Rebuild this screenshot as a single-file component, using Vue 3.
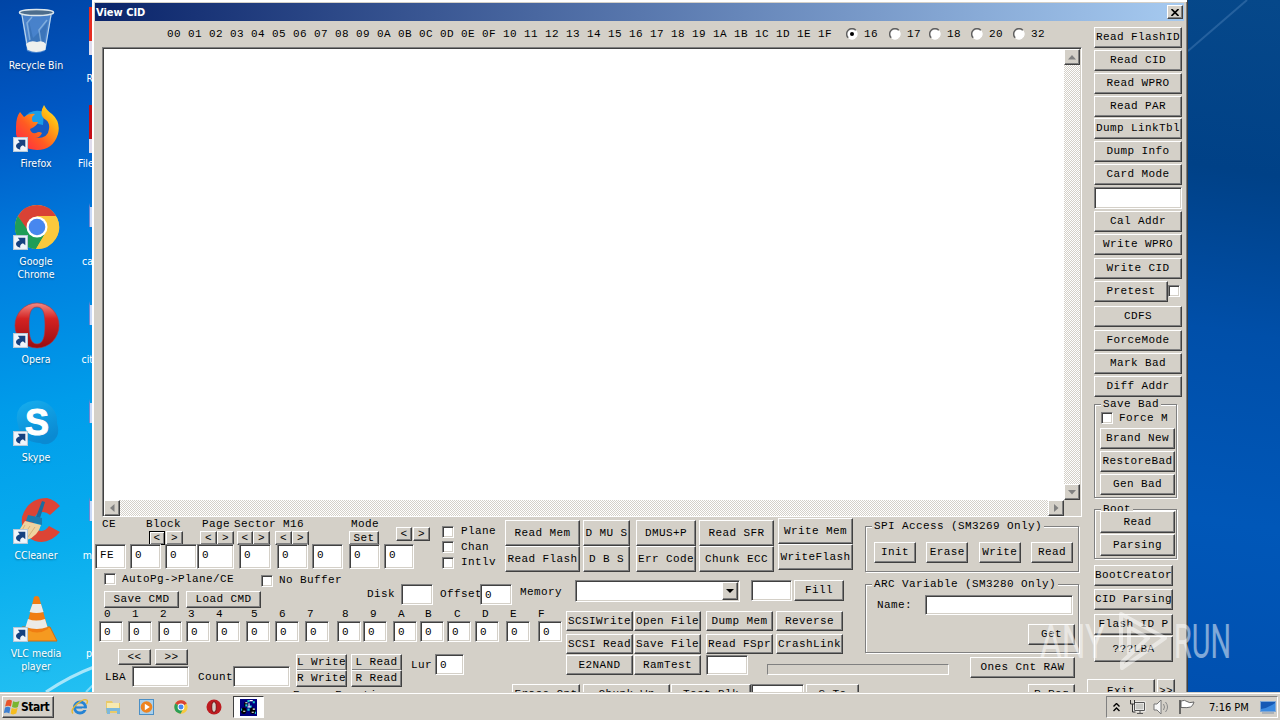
<template>
  <div class="desktop">
    <!-- light streaks of the wallpaper -->
    <svg class="streaks" width="1280" height="692" viewBox="0 0 1280 692">
      <path d="M1188 51L1247 0" stroke="#6fa0d0" stroke-opacity=".3" stroke-width="2" />
      <path d="M46 692Q70 676 94 667" fill="none" stroke="#c8f0fc" stroke-opacity=".8" stroke-width="3" />
      <path d="M86 692L94 684" stroke="#c8f0fc" stroke-opacity=".6" stroke-width="2" />
    </svg>

    <!-- desktop shortcuts -->
    <div class="shortcuts">
      <div v-for="s in shortcuts" :key="s.id" class="shortcut">
        <div class="shortcut__pic">
          <svg v-if="s.id === 'bin'" width="48" height="48" viewBox="0 0 48 48">
            <path d="M9 6 L15 44 Q24 48 33 44 L40 6 Z" fill="#8fb9e8" fill-opacity=".5" />
            <path d="M10 8 L16 43 M39 8 L33 43" stroke="#b9d4ec" stroke-width="1.2" fill="none" />
            <path d="M17 14l4 17 8-8 7-9-4 22-14-2z" fill="#3269ab" opacity=".55" />
            <path d="M20 10l-5 6 3 17M35 13l-8 10 2 12" stroke="#b7d7ef" stroke-width="1.500" fill="none" opacity=".5" />
            <path d="M14 37 Q18 33 25 35 Q31 33 34 37 L33 43 Q24 47 16 43Z" fill="#eef0ee" />
            <ellipse cx="24.5" cy="5.500" rx="17" ry="3" fill="#4d6d8c" stroke="#dce7ed" stroke-width="1.500" />
          </svg>
          <svg v-else-if="s.id === 'firefox'" width="48" height="48" viewBox="0 0 48 48">
            <defs>
              <linearGradient id="ff" x1="0" y1="1" x2="1" y2="0">
                <stop offset="0" stop-color="#ff1d50" />
                <stop offset=".4" stop-color="#ff5b22" />
                <stop offset=".75" stop-color="#ffb813" />
                <stop offset="1" stop-color="#fff34a" />
              </linearGradient>
            </defs>
            <circle cx="26" cy="22" r="16" fill="#155bc4" />
            <path d="M12 13 Q19 3 32 7 L31 20 L22 18Z" fill="#199ee8" />
            <path d="M4 22 Q4 12 8 7 L12 12 Q17 8 23 9 Q18 13 21 17 L26 17 Q25 21 18 24 Q19 29 24 28 Q27 26 30 28 Q28 33 23 33 Q36 34 37 24 Q38 18 34 15 Q26 10 32 0 Q35 6 40 9 Q49 17 46 29 Q41 45 25 45 Q7 44 4 29Z" fill="url(#ff)" />
          </svg>
          <svg v-else-if="s.id === 'chrome'" width="48" height="48" viewBox="0 0 48 48">
            <circle cx="25" cy="24" r="22" fill="#fbc93d" />
            <path d="M25 13 H44.1 A22 22 0 0 0 5.900 13 L15 28Z" fill="#d94235" />
            <path d="M5.9 13 A22 22 0 0 0 24 46 L34 29 L17 29Z" fill="#1f9d57" />
            <path d="M34 14 H44.7 A22 22 0 0 1 24 46 L34 29Z" fill="#fbc93d" />
            <circle cx="25" cy="24" r="10.500" fill="#fff" />
            <circle cx="25" cy="24" r="8.300" fill="#4787ef" />
          </svg>
          <svg v-else-if="s.id === 'opera'" width="48" height="48" viewBox="0 0 48 48">
            <defs>
              <linearGradient id="op" x1="0" y1="0" x2="0" y2="1">
                <stop offset="0" stop-color="#f08c86" />
                <stop offset=".35" stop-color="#d42222" />
                <stop offset="1" stop-color="#980d10" />
              </linearGradient>
            </defs>
            <path fill-rule="evenodd" fill="url(#op)" stroke="#b93035" stroke-width=".6" d="M25 2 A22 22.500 0 1 0 25 47 A22 22.500 0 1 0 25 2Z M25 6 C32 6 33 14 33 24.500 C33 36 31 43 25 43 C19 43 17 36 17 24.500 C17 14 18 6 25 6Z" />
          </svg>
          <svg v-else-if="s.id === 'skype'" width="48" height="48" viewBox="0 0 48 48">
            <defs>
              <linearGradient id="sk" x1="0" y1="0" x2=".4" y2="1">
                <stop offset="0" stop-color="#16aeef" />
                <stop offset="1" stop-color="#0a8ad2" />
              </linearGradient>
            </defs>
            <path d="M16 3 Q28 -1 36 5 Q46 12 45 24 Q49 37 40 43 Q34 47 28 44 Q9 43 6 26 Q1 9 16 3Z" fill="url(#sk)" />
            <text x="25" y="36" text-anchor="middle" class="skype-s">S</text>
          </svg>
          <svg v-else-if="s.id === 'ccleaner'" width="50" height="48" viewBox="0 0 50 48">
            <path d="M48 9 L38 18 Q31 12 24 18 Q19 28 26 33 Q32 36 37 29 L48 35 Q37 48 23 44 Q8 38 10 20 Q16 1 35 1 Q43 3 48 9Z" fill="#dc4435" />
            <path d="M30 4 l3 1 -5 16 -4-1z" fill="#1c6c9e" />
            <path d="M16 18 l14 3 v7 l-16-4z" fill="#1c7cae" />
            <path d="M13 24 l16 4 q-3 11-14 15 l-9-8z" fill="#efd3a0" />
            <path d="M13 28l-5 9M18 29l-6 9M23 30l-7 10" stroke="#d9b27a" fill="none" />
          </svg>
          <svg v-else width="48" height="48" viewBox="0 0 48 48">
            <path d="M10 32 H38 L45 46 H7Z" fill="#f59a20" stroke="#d66b0a" />
            <path d="M22 2 Q24.500 0 27 2 L36 34 Q25 41 14 34Z" fill="#f07d12" />
            <path d="M20.500 9 L29 9 L31.500 17 Q24.500 19 17.500 17Z M16 24 Q24 27 33 24 L35.500 32 Q25 36 13.500 32Z" fill="#ecebe8" />
          </svg>
          <svg class="shortcut__arrow" v-if="s.id !== 'bin'" width="15" height="15" viewBox="0 0 14 14">
            <rect x=".5" y=".5" width="13" height="13" fill="#f0f5fa" stroke="#b7c9d8" />
            <path d="M4.500 2.500h7v7L9.300 7.600Q6 8.500 6.800 12Q1 10 3.500 6.500Q4.800 5.200 6.300 4.800Z" fill="#16417f" />
          </svg>
        </div>
        <div class="shortcut__name">{{ s.name }}</div>
      </div>
    </div>

    <!-- second icon column, mostly behind the dialog -->
    <div class="peek">
      <div v-for="(p, i) in peeks" :key="i" class="peek__item">
        <div class="peek__pic"><i :class="'peek__' + p.kind"></i></div>
        <div class="peek__name">{{ p.name }}</div>
      </div>
    </div>

    <div class="dialog">
      <div class="title">
        <span>View CID</span>
        <button class="title__close">
          <svg width="8" height="7" viewBox="0 0 8 7"><path d="M.5 0l7 7M7.500 0l-7 7" stroke="#000" stroke-width="1.600" /></svg>
        </button>
      </div>

      <div class="body">
        <div class="main">
          <div class="hexbar">
            <span class="hexbar__cols">{{ hexCols }}</span>
            <label v-for="(r, i) in radios" :key="r.label" class="radio" :style="{ width: r.w + 'px' }">
              <svg width="12" height="12" viewBox="0 0 12 12">
                <circle cx="6" cy="6" r="5.200" fill="#fff" stroke="#fff" />
                <path d="M2.200 9.800A5.300 5.300 0 0 1 9.800 2.200" fill="none" stroke="#606060" stroke-width="1.500" />
                <circle v-if="i === 0" cx="6" cy="6" r="2" fill="#000" />
              </svg>
              <span>{{ r.label }}</span>
            </label>
          </div>

          <div class="memo">
            <div class="memo__top">
              <div class="memo__text"></div>
              <div class="bar bar--v">
                <span class="bar__btn"><svg width="8" height="5"><path d="M4 0l4 4.500H0z" fill="#808080" /></svg></span>
                <span class="bar__btn"><svg width="8" height="5"><path d="M0 0h8L4 4.500z" fill="#808080" /></svg></span>
              </div>
            </div>
            <div class="memo__bottom">
              <div class="bar bar--h">
                <span class="bar__btn"><svg width="5" height="8"><path d="M4.500 0v8L0 4z" fill="#808080" /></svg></span>
                <span class="bar__btn"><svg width="5" height="8"><path d="M0 0v8l4.500-4z" fill="#808080" /></svg></span>
              </div>
            </div>
          </div>

          <div class="panel">
            <div class="panel__left">
              <div class="band">
                <div class="address">
                  <div class="row row--labels">
                    <span v-for="l in addrLabels" :key="l.t" :style="place(l)">{{ l.t }}</span>
                  </div>
                  <div class="row row--spin">
                    <button
                      v-for="(b, i) in spins"
                      :key="i"
                      class="btn"
                      :class="{ 'btn--default': i === 0, 'btn--up': i > 8 }"
                      :style="place(b)"
                    >{{ b.t }}</button>
                  </div>
                  <div class="row row--addr">
                    <div v-for="(f, i) in addrFields" :key="i" class="field" :style="place(f)">{{ f.t }}</div>
                  </div>
                </div>
                <div class="flags">
                  <label v-for="f in ['Plane', 'Chan', 'Intlv']" :key="f" class="check"><i></i>{{ f }}</label>
                </div>
                <div class="actions">
                  <div v-for="(col, i) in actions" :key="i" class="actions__col" :style="{ width: col.w + 'px' }">
                    <button v-for="t in col.items" :key="t" class="btn">{{ t }}</button>
                  </div>
                </div>
              </div>

              <div class="lower">
                <div class="lower__left">
                  <div class="options">
                    <div class="options__cmd">
                      <div class="options__checks">
                        <label class="check"><i></i><span>AutoPg-&gt;Plane/CE</span></label>
                        <label class="check check--low"><i></i><span>No Buffer</span></label>
                      </div>
                      <div class="options__btns">
                        <button class="btn">Save CMD</button>
                        <button class="btn">Load CMD</button>
                      </div>
                    </div>
                    <div class="options__disk">
                      <span>Disk</span>
                      <div class="field"></div>
                      <span class="options__offset">Offset</span>
                      <div class="field">0</div>
                      <span class="options__memory">Memory</span>
                    </div>
                  </div>
                  <div class="row row--digits">
                    <span v-for="d in digits" :key="d.t" :style="place(d)">{{ d.t }}</span>
                  </div>
                  <div class="row row--bytes">
                    <div v-for="(b, i) in bytes" :key="i" class="field" :style="place(b)">0</div>
                  </div>
                  <div class="lba">
                    <div class="lba__range">
                      <div class="lba__nav">
                        <button class="btn">&lt;&lt;</button>
                        <button class="btn">&gt;&gt;</button>
                      </div>
                      <div class="lba__fields">
                        <span>LBA</span>
                        <div class="field"></div>
                        <span class="lba__count">Count</span>
                        <div class="field"></div>
                      </div>
                    </div>
                    <div class="lba__rw">
                      <button class="btn">L Write</button>
                      <button class="btn">L Read</button>
                      <button class="btn">R Write</button>
                      <button class="btn">R Read</button>
                      <span class="lba__cut">Erase Function</span>
                    </div>
                    <span class="lba__lur">Lur</span>
                    <div class="field field--lur">0</div>
                  </div>
                </div>

                <div class="lower__right">
                  <div class="fill">
                    <div class="combo">
                      <span class="combo__btn"><svg width="8" height="4"><path d="M0 0h8L4 4z" /></svg></span>
                    </div>
                    <div class="field fill__value"></div>
                    <button class="btn fill__btn">Fill</button>
                  </div>
                  <div class="scsi">
                    <button v-for="t in scsi" :key="t" class="btn">{{ t }}</button>
                    <div class="field"></div>
                    <div class="progress"></div>
                  </div>
                  <div class="row row--cut">
                    <template v-for="(c, i) in cutRow" :key="i">
                      <button v-if="c.t" class="btn" :style="place(c)">{{ c.t }}</button>
                      <div v-else class="field" :style="place(c)"></div>
                    </template>
                  </div>
                </div>
              </div>
            </div>

            <div class="panel__right">
              <div class="group group--spi">
                <span class="group__name">SPI Access (SM3269 Only)</span>
                <div class="group__row">
                  <button v-for="t in ['Init', 'Erase', 'Write', 'Read']" :key="t" class="btn">{{ t }}</button>
                </div>
              </div>
              <div class="group group--arc">
                <span class="group__name">ARC Variable (SM3280 Only)</span>
                <div class="arc__row">
                  <span>Name:</span>
                  <div class="field"></div>
                </div>
                <button class="btn arc__get">Get</button>
              </div>
              <button class="btn ones">Ones Cnt RAW</button>
              <button class="btn clear">R Reg</button>
            </div>
          </div>
        </div>

        <div class="side">
          <button v-for="t in sideTop" :key="t" class="btn">{{ t }}</button>
          <div class="field side__field"></div>
          <button class="btn side__cal">Cal Addr</button>
          <button class="btn side__wpro">Write WPRO</button>
          <button class="btn side__cid">Write CID</button>
          <div class="side__pretest">
            <button class="btn">Pretest</button>
            <label class="check"><i></i></label>
          </div>
          <button class="btn side__cdfs">CDFS</button>
          <button class="btn side__force">ForceMode</button>
          <button class="btn">Mark Bad</button>
          <button class="btn">Diff Addr</button>

          <div class="group group--bad">
            <span class="group__name">Save Bad</span>
            <label class="check"><i></i>Force M</label>
            <button class="btn">Brand New</button>
            <button class="btn">RestoreBad</button>
            <button class="btn">Gen Bad</button>
          </div>
          <div class="group group--boot">
            <span class="group__name">Boot</span>
            <button class="btn">Read</button>
            <button class="btn">Parsing</button>
          </div>
          <div class="side__last">
            <button class="btn">BootCreator</button>
            <button class="btn">CID Parsing</button>
            <button class="btn side__flash">Flash ID P</button>
            <button class="btn side__lba">???LBA</button>
          </div>
          <div class="side__exit">
            <button class="btn">Exit</button>
            <button class="btn">&gt;&gt;</button>
          </div>
        </div>
      </div>
    </div>

    <svg class="watermark" width="200" height="70" viewBox="0 0 200 70">
      <text x="4" y="49" textLength="65" lengthAdjust="spacingAndGlyphs">ANY</text>
      <path d="M85 42 V5 L129 29 L86 59 V53 L112 29 L93 18 V44 L107 35" fill="none" stroke="#fff" stroke-width="4" stroke-linejoin="round" />
      <text x="138" y="49" textLength="57" lengthAdjust="spacingAndGlyphs">RUN</text>
    </svg>

    <div class="taskbar">
      <button class="start">
        <svg width="16" height="16" viewBox="0 0 15 15">
          <path d="M2.500 1.500q3-1.500 5 .2L6.500 7Q4 5.500 1 7z" fill="#e8542a" />
          <path d="M8.500 2.200q3 1.300 6-.4L13 7.400q-3 1.600-5.500.1z" fill="#79b52f" />
          <path d="M1 8q3-1.500 5 .2L5 13.500Q2.500 12-.2 13.300z" fill="#3d7fd0" />
          <path d="M7.200 8.500q3 1.300 5.600-.2L11.500 13.700q-3 1.500-5.300.1z" fill="#f6bd1e" />
        </svg>
        Start
      </button>
      <div class="quick">
        <span class="quick__item">
          <svg width="18" height="18" viewBox="0 0 18 18">
            <circle cx="9" cy="9.500" r="5.500" fill="none" stroke="#2583d4" stroke-width="3" />
            <path d="M5 9.500h10" stroke="#2583d4" stroke-width="2.200" />
            <path d="M11 11.200h5" stroke="#d4d0c8" stroke-width="1.600" />
            <path d="M2 15.500Q-1 12 6 6T16 2.200Q17 4 15.500 6" fill="none" stroke="#e7b830" stroke-width="1.400" />
          </svg>
        </span>
        <span class="quick__item">
          <svg width="18" height="18" viewBox="0 0 18 18">
            <path d="M2 3h6l1 2h7v10H2z" fill="#e9ca69" />
            <path d="M3 5h12v6H3z" fill="#f8eab0" />
            <path d="M2 10h14v6h-3v-3H6v3H3z" fill="#7cb8dc" />
          </svg>
        </span>
        <span class="quick__item">
          <svg width="18" height="18" viewBox="0 0 18 18">
            <rect x="1.500" y="1.500" width="14" height="15" fill="#a9d0ec" stroke="#4b8fc5" />
            <circle cx="8.500" cy="9" r="5.800" fill="#ee8420" />
            <path d="M6.800 5.800l5 3.200-5 3.200z" fill="#fff" />
          </svg>
        </span>
        <span class="quick__item">
          <svg width="16" height="16" viewBox="0 0 18 18">
            <circle cx="9" cy="9" r="7.500" fill="#f7c940" />
            <path d="M9 9L2.500 5.200a7.500 7.500 0 0 1 13 0z" fill="#d94235" />
            <path d="M9 9L2.500 5.200A7.500 7.500 0 0 0 8.500 16.500L12 10z" fill="#2b9e57" />
            <circle cx="9" cy="9" r="3.800" fill="#fff" />
            <circle cx="9" cy="9" r="2.800" fill="#4787ef" />
          </svg>
        </span>
        <span class="quick__item">
          <svg width="18" height="18" viewBox="0 0 18 18">
            <circle cx="9" cy="9" r="7.500" fill="#bd1b20" />
            <ellipse cx="9" cy="9" rx="2.300" ry="5.300" fill="#d4d0c8" stroke="#7a1013" />
          </svg>
        </span>
        <span class="quick__active">
          <svg width="17" height="17" viewBox="0 0 16 16">
            <rect width="16" height="16" fill="#00007e" />
            <path d="M4 3h3v4H4zM1 11q0-3 2.500-3T6 11t-2.500 3T1 11M9.500 11q0-3 2.500-3t2.500 3-2.500 3-2.500-3z" fill="#000" />
            <path d="M7 1h2v2H7zM12 2h2v2h-2zM5 5h2v2H5zM9 6h2v2H9zM7 9h2v2H7zM1 9h1v2H1zM14 12h1v2h-1z" fill="#18c8d0" />
            <path d="M9 1h3v1H9zM5 3h2v1H5zM7 7h3v1H7zM3 11h2v1H3zM12 9h2v1h-2zM11 12h2v1h-2zM8 4h1v3H8z" fill="#fff" />
          </svg>
        </span>
      </div>
      <div class="tray">
        <svg class="tray__more" width="7" height="9"><path d="M.5 3.500l3-3 3 3M.5 8l3-3 3 3" fill="none" stroke="#000" stroke-width="1.400" /></svg>
        <svg class="tray__net" width="17" height="17" viewBox="0 0 17 17">
          <path d="M5.500 3.500h10v8h-10z" fill="#c8c8c4" stroke="#fff" stroke-width="2" />
          <path d="M5.500 3.500h10v8h-10zM8 14.500h6M11 12v2" fill="none" stroke="#555" />
          <path d="M1.500 1v4h4V1M3.500 5v8h3" fill="none" stroke="#333" />
        </svg>
        <svg class="tray__vol" width="17" height="16" viewBox="0 0 17 16">
          <path d="M1 5h3l4-4v14l-4-4H1z" fill="#f8f8f8" stroke="#777" />
          <path d="M10.500 5q2 3 0 6M12.500 3q4 5 0 10" fill="none" stroke="#888" />
        </svg>
        <svg class="tray__flag" width="17" height="16" viewBox="0 0 17 16">
          <path d="M3 2q4-1.500 6 .5t7 .5q-1 4-3.500 5T3 8.500z" fill="#fff" stroke="#666" />
          <path d="M2 1v14" stroke="#444" stroke-width="1.500" />
        </svg>
        <span class="tray__time">7:16 PM</span>
        <svg class="tray__desk" width="16" height="13" viewBox="0 0 16 13">
          <rect x=".5" y=".5" width="15" height="10" fill="#1559b5" stroke="#7ea7d6" />
          <path d="M1 8Q8 7 15 2v8H1z" fill="#3b8ae0" />
          <path d="M2 12h12" stroke="#8394a8" />
        </svg>
      </div>
    </div>
  </div>
</template>

<script setup>
const shortcuts = [
  { id: 'bin', name: 'Recycle Bin' },
  { id: 'firefox', name: 'Firefox' },
  { id: 'chrome', name: 'Google Chrome' },
  { id: 'opera', name: 'Opera' },
  { id: 'skype', name: 'Skype' },
  { id: 'ccleaner', name: 'CCleaner' },
  { id: 'vlc', name: 'VLC media player' },
]

const peeks = [
  { name: 'R', kind: 'acrobat' },
  { name: 'File', kind: 'red' },
  { name: 'ca', kind: 'doc' },
  { name: 'cit', kind: 'doc' },
  { name: '', kind: 'doc' },
  { name: 'm', kind: 'doc' },
  { name: 'p', kind: 'none' },
]

const hexCols = Array.from({ length: 32 }, (_, i) =>
  i.toString(16).toUpperCase().padStart(2, '0')
).join(' ')

const radios = [
  { label: '16', w: 43 },
  { label: '17', w: 40 },
  { label: '18', w: 42 },
  { label: '20', w: 42 },
  { label: '32', w: 40 },
]

// turns [left, width, text] into gap + width inside a flex row
function spread(start, cells) {
  let at = start
  return cells.map(([x, w, t]) => {
    const cell = { gap: x - at, w, t }
    at = x + w
    return cell
  })
}

function place(c) {
  return { marginLeft: c.gap + 'px', width: c.w + 'px' }
}

const addrLabels = spread(95, [
  [102, 14, 'CE'], [146, 35, 'Block'], [202, 28, 'Page'],
  [234, 42, 'Sector'], [283, 21, 'M16'], [351, 28, 'Mode'],
])

const spins = spread(95, [
  [149, 16, '<'], [166, 17, '>'], [200, 17, '<'], [217, 17, '>'],
  [237, 16, '<'], [253, 17, '>'], [275, 17, '<'], [292, 17, '>'],
  [349, 30, 'Set'], [396, 16, '<'], [413, 17, '>'],
])

const addrFields = spread(95, [
  [95, 31, 'FE'], [130, 31, '0'], [165, 32, '0'], [197, 37, '0'], [239, 32, '0'],
  [277, 31, '0'], [312, 31, '0'], [349, 31, '0'], [384, 30, '0'],
])

const actions = [
  { w: 75, items: ['Read Mem', 'Read Flash'] },
  { w: 47, items: ['D MU S', 'D B S'] },
  { w: 60, items: ['DMUS+P', 'Err Code'] },
  { w: 75, items: ['Read SFR', 'Chunk ECC'] },
  { w: 75, items: ['Write Mem', 'WriteFlash'] },
]

const digitX = [104, 132, 160, 188, 216, 251, 279, 307, 342, 370, 398, 425, 454, 482, 510, 538]
const digits = spread(95, digitX.map((x, i) => [x, 8, i.toString(16).toUpperCase()]))

const byteX = [99, 128, 158, 186, 216, 246, 275, 305, 337, 363, 393, 420, 447, 475, 506, 538]
const bytes = spread(95, byteX.map((x) => [x, 24, '0']))

const scsi = [
  'SCSIWrite', 'Open File', 'Dump Mem', 'Reverse',
  'SCSI Read', 'Save File', 'Read FSpr', 'CrashLink',
  'E2NAND', 'RamTest',
]

const cutRow = spread(566, [
  [512, 68, 'Erase Cnt'], [583, 87, 'Chunk Wr'], [671, 80, 'Test Blk'],
  [751, 53, ''], [806, 53, 'S Te'],
])

const sideTop = [
  'Read FlashID', 'Read CID', 'Read WPRO', 'Read PAR',
  'Dump LinkTbl', 'Dump Info', 'Card Mode',
]
</script>

<style>
body {
  margin: 0;
  overflow: hidden;
}
</style>

<style scoped>
.desktop,
.desktop * {
  box-sizing: border-box;
}
.desktop {
  position: relative;
  width: 1280px;
  height: 720px;
  overflow: hidden;
  font-family: "DejaVu Sans Condensed", "DejaVu Sans", sans-serif;
  font-size: 10.5px;
  background:
    linear-gradient(168deg, #0045a6 0%, #0058c4 17%, #007bdd 35%, #009cea 58%, #08adee 78%, #23c0f2 100%) 0 0 / 94px 692px no-repeat,
    linear-gradient(188deg, #06488a 0%, #004187 25%, #004fa9 48%, #0057b8 75%, #0050b0 100%) 100% 0 / 96px 692px no-repeat,
    #0057b8;
}
.streaks {
  position: absolute;
  left: 0;
  top: 0;
}

/* shortcuts */
.shortcuts {
  position: absolute;
  left: 0;
  top: 7px;
  width: 72px;
}
.shortcut {
  height: 98px;
  text-align: center;
  color: #fff;
}
.shortcut__pic {
  position: relative;
  height: 48px;
  margin-left: 12px;
  text-align: left;
}
.shortcut__pic > svg {
  display: block;
}
.shortcut__pic > .shortcut__arrow {
  position: absolute;
  left: 1px;
  top: 32px;
}
.shortcut__name {
  width: 66px;
  margin: 4px auto 0;
  line-height: 13px;
  text-shadow: 0 1px 2px rgba(0, 0, 0, .4);
}
.skype-s {
  font: bold 36px "Liberation Sans", sans-serif;
  fill: #fff;
  stroke: #fff;
}
.peek {
  position: absolute;
  left: 78px;
  top: 7px;
  width: 15px;
  overflow: hidden;
  color: #fff;
}
.peek__item {
  height: 98px;
}
.peek__pic {
  height: 48px;
  padding-left: 11px;
}
.peek__pic i {
  display: block;
  height: 48px;
}
.peek__pic .peek__acrobat {
  background: linear-gradient(#e52c21 70%, #dfdcec 70%);
}
.peek__pic .peek__red {
  background: linear-gradient(#c40d16 70%, #dfdcec 70%);
}
.peek__pic .peek__doc {
  height: 24px;
  border-top: 4px solid transparent;
  border-left: 1px solid #7386cf;
  background: #c9d9f6;
  background-clip: padding-box;
}
.peek__name {
  margin-top: 4px;
  line-height: 13px;
  text-align: right;
}
.peek__item:nth-child(1) .peek__name {
  margin-top: 17px;
}
.peek__item:nth-child(6) .peek__name,
.peek__item:nth-child(7) .peek__name {
  padding-right: 1px;
}

/* dialog */
.dialog {
  position: absolute;
  left: 92px;
  top: 0;
  width: 1096px;
  height: 692px;
  padding: 3px 3px 0;
  overflow: hidden;
  background: #d4d0c8;
  border-right: 1px solid #404040;
  box-shadow: inset 2px 2px 0 #fff, inset -1px 0 0 #808080;
  font-family: "Liberation Mono", monospace;
  font-size: 11px;
  letter-spacing: .4px;
  line-height: 13px;
  color: #000;
  white-space: pre;
}
.title {
  display: flex;
  align-items: center;
  justify-content: space-between;
  height: 18px;
  padding: 0 1px;
  background: linear-gradient(90deg, #0a246a, #a6caf0);
  color: #fff;
  font: bold 11px "DejaVu Sans Condensed", sans-serif;
  letter-spacing: 0;
}
.title__close {
  display: flex;
  align-items: center;
  justify-content: center;
  width: 16px;
  height: 14px;
  padding: 0;
  background: #d4d0c8;
  border: 1px solid;
  border-color: #fff #404040 #404040 #fff;
  box-shadow: inset -1px -1px 0 #808080;
}
.body {
  display: flex;
  height: 671px;
}
.main {
  width: 990px;
  flex: none;
}

/* basic controls */
.btn {
  display: block;
  flex: none;
  height: 21px;
  padding: 0;
  overflow: hidden;
  background: #d4d0c8;
  border: 1px solid;
  border-color: #fff #404040 #404040 #fff;
  box-shadow: inset -1px -1px 0 #808080;
  font: inherit;
  letter-spacing: inherit;
  line-height: 13px;
  text-align: center;
  color: #000;
  white-space: pre;
}
.btn--default {
  border-color: #000;
  box-shadow: inset 1px 1px 0 #fff, inset -1px -1px 0 #808080;
}
.btn--up {
  margin-top: -4px;
}
.field {
  flex: none;
  height: 21px;
  padding: 2px 0 0 4px;
  background: #fff;
  border: 1px solid;
  border-color: #808080 #fff #fff #808080;
  box-shadow: inset 1px 1px 0 #404040, inset -1px -1px 0 #d4d0c8;
}
.check {
  display: flex;
  align-items: center;
  height: 13px;
}
.check i {
  width: 12px;
  height: 12px;
  margin-right: 7px;
  background: #fff;
  border: 1px solid;
  border-color: #808080 #fff #fff #808080;
  box-shadow: inset 1px 1px 0 #404040, inset -1px -1px 0 #d4d0c8;
}
.row {
  display: flex;
}
.row > * {
  flex: none;
}

/* header over the memo */
.hexbar {
  display: flex;
  align-items: center;
  height: 26px;
  padding-left: 72px;
}
.hexbar__cols {
  width: 679px;
}
.radio {
  display: flex;
  align-items: center;
  gap: 6px;
  white-space: nowrap;
}
.memo {
  width: 980px;
  height: 470px;
  margin-left: 7px;
  border: 1px solid;
  border-color: #808080 #fff #fff #808080;
  box-shadow: inset 1px 1px 0 #404040;
  padding: 1px;
}
.memo__top {
  display: flex;
  height: 451px;
}
.memo__text {
  flex: 1;
  background: #fff;
}
.memo__bottom {
  height: 15px;
  padding-right: 16px;
}
.bar {
  display: flex;
  justify-content: space-between;
  background: repeating-conic-gradient(#fff 0 25%, #d4d0c8 0 50%) 0 0 / 2px 2px;
}
.bar--v {
  width: 16px;
  flex-direction: column;
}
.bar--h {
  height: 16px;
}
.bar__btn,
.combo__btn {
  display: flex;
  align-items: center;
  justify-content: center;
  width: 16px;
  height: 16px;
  background: #d4d0c8;
  border: 1px solid;
  border-color: #fff #404040 #404040 #fff;
  box-shadow: inset -1px -1px 0 #808080;
}

/* bottom panel */
.panel {
  display: flex;
  height: 175px;
}
.panel__left {
  width: 770px;
  flex: none;
}
.band {
  display: flex;
  height: 55px;
}
.address {
  width: 347px;
}
.row--labels {
  height: 14px;
  padding-top: 1px;
}
.row--spin {
  height: 13px;
}
.row--spin .btn {
  height: 14px;
  line-height: 12px;
}
.row--addr .field {
  height: 25px;
  padding-top: 4px;
}
.flags {
  display: flex;
  flex-direction: column;
  gap: 2.5px;
  width: 63px;
  padding-top: 8px;
}
.actions {
  display: flex;
  gap: 3px;
  padding-top: 3px;
}
.actions__col {
  display: flex;
  flex-direction: column;
}
.actions__col .btn {
  height: 26px;
  padding-top: 1px;
}
.actions__col:nth-child(3) {
  margin-left: 3px;
}
.actions__col:last-child {
  margin: -2px 0 0 1px;
}
.lower {
  display: flex;
}
.lower__left {
  width: 471px;
  flex: none;
}
.options {
  display: flex;
  height: 36px;
}
.options__cmd {
  width: 272px;
  padding-left: 9px;
}
.options__checks {
  display: flex;
  height: 19px;
}
.options__checks .check {
  width: 157px;
}
.options__checks .check span {
  margin-top: 2px;
}
.options__checks .check i {
  margin-right: 6px;
}
.options__checks .check--low {
  width: 100px;
  margin-top: 2px;
}
.options__checks .check--low span {
  margin-top: 0;
}
.options__btns {
  display: flex;
  gap: 7px;
}
.options__btns .btn {
  width: 75px;
  height: 17px;
}
.options__disk {
  display: flex;
  padding-top: 12px;
}
.options__disk span {
  width: 34px;
  padding-top: 4px;
}
.options__disk .field {
  width: 32px;
  padding-top: 4px;
}
.options__disk .options__offset {
  width: 40px;
  margin-left: 7px;
}
.options__disk .options__memory {
  width: 42px;
  margin-left: 8px;
  padding-top: 2px;
}
.row--digits {
  height: 13px;
}
.row--bytes .field {
  padding-top: 4px;
}
.lba {
  display: flex;
  height: 50px;
}
.lba__range {
  width: 201px;
  flex: none;
  padding-top: 7px;
}
.lba__nav {
  display: flex;
  gap: 4px;
  padding-left: 23px;
}
.lba__nav .btn {
  width: 33px;
  height: 16px;
}
.lba__fields {
  display: flex;
  padding: 1px 0 0 10px;
}
.lba__fields span {
  width: 27px;
  padding-top: 5px;
}
.lba__fields .field {
  width: 57px;
}
.lba__fields .lba__count {
  width: 35px;
  margin-left: 9px;
}
.lba__rw {
  display: grid;
  grid-template-columns: 51px 51px;
  grid-auto-rows: 16px;
  column-gap: 4px;
  width: 106px;
  margin-top: 12px;
}
.lba__rw .btn {
  height: 17px;
}
.lba__cut {
  grid-column: 1 / 3;
  margin: 3px 0 0 -3px;
}
.lba__lur {
  width: 24px;
  margin: 17px 0 0 9px;
}
.field--lur {
  width: 29px;
  margin-top: 12px;
  padding-top: 4px;
}
.lower__right {
  width: 299px;
  flex: none;
}
.fill {
  display: flex;
  padding: 8px 0 0 9px;
}
.combo {
  display: flex;
  justify-content: flex-end;
  width: 165px;
  height: 22px;
  padding: 1px;
  background: #fff;
  border: 1px solid;
  border-color: #808080 #fff #fff #808080;
  box-shadow: inset 1px 1px 0 #404040, inset -1px -1px 0 #d4d0c8;
}
.combo__btn {
  height: 18px;
}
.fill__value {
  width: 41px;
  margin-left: 11px;
}
.fill__btn {
  width: 50px;
  margin-left: 2px;
}
.scsi {
  display: grid;
  grid-template-columns: 68px 67px 67px 67px;
  grid-template-rows: 23px 21px 21px;
  width: 277px;
  padding-top: 9px;
}
.scsi .btn,
.scsi .field {
  height: 20px;
}
.scsi > :nth-child(4n + 3) {
  margin-left: 5px;
}
.scsi > :nth-child(4n + 4) {
  margin-left: 8px;
}
.scsi .btn {
  width: 67px;
}
.scsi .field {
  width: 42px;
}
.scsi .progress {
  width: 182px;
  height: 11px;
  margin: 9px 0 0 -1px;
  border: 1px solid;
  border-color: #808080 #fff #fff #808080;
}
.row--cut {
  padding-top: 8px;
}
.row--cut .btn,
.row--cut .field {
  height: 24px;
}
.row--cut .btn {
  padding-bottom: 3px;
}

/* etched groups */
.group {
  flex: none;
  border: 1px solid #808080;
  box-shadow: 1px 1px 0 #fff, inset 1px 1px 0 #fff;
}
.group__name {
  display: block;
  width: max-content;
  height: 13px;
  margin: -7px 0 0 6px;
  padding: 0 2px;
  background: #d4d0c8;
}
.panel__right {
  display: flex;
  flex-direction: column;
  width: 214px;
  flex: none;
  padding-top: 9px;
}
.group--spi {
  height: 46px;
}
.group__row {
  display: flex;
  justify-content: space-between;
  padding: 9px 5px 0 8px;
}
.group__row .btn {
  width: 42px;
}
.group--arc {
  height: 69px;
  margin-top: 12px;
}
.arc__row {
  display: flex;
  padding: 4px 5px 0 11px;
}
.arc__row span {
  width: 48px;
  padding-top: 4px;
}
.arc__row .field {
  width: 148px;
  height: 20px;
}
.arc__get {
  width: 47px;
  margin: 9px 0 0 162px;
}
.ones {
  width: 105px;
  margin: 4px 0 0 105px;
}
.clear {
  width: 47px;
  height: 24px;
  margin: 6px 0 0 163px;
  padding-bottom: 3px;
}

/* right hand column */
.side {
  display: flex;
  flex-direction: column;
  width: 88px;
  flex: none;
  margin-left: 9px;
  padding-top: 6px;
}
.side > .btn,
.side__pretest {
  margin-bottom: 2px;
}
.side > .btn:nth-child(-n + 7) {
  margin-bottom: 1.85px;
}
.side__field {
  width: 88px;
  height: 22px;
}
.side > .side__cal {
  margin-top: 2px;
}
.side > .side__wpro {
  margin-bottom: 3px;
}
.side__pretest {
  display: flex;
  align-items: center;
  flex: none;
}
.side__pretest .btn {
  width: 74px;
}
.side > .side__cdfs {
  margin: 2px 0 3px;
}
.group--bad {
  width: 83px;
  height: 94px;
  margin-top: 5px;
}
.group--bad .check {
  margin: 1px 0 3px 6px;
}
.group--bad .check i {
  margin-right: 6px;
}
.group--bad .btn,
.group--boot .btn {
  width: 75px;
  margin: 0 0 2px 5px;
}
.group--boot {
  width: 83px;
  height: 50px;
  margin-top: 11px;
}
.group--boot .group__name {
  height: 8px;
  overflow: hidden;
}
.group--boot .btn {
  height: 22px;
  margin-bottom: 1px;
  padding-top: 1px;
}
.side__last {
  display: flex;
  flex-direction: column;
  gap: 3px;
  width: 79px;
  flex: none;
  margin-top: 6px;
}
.side__flash {
  margin-top: 1px;
}
.side__lba {
  height: 26px;
  margin-top: -2px;
  padding-top: 2px;
}
.side__exit {
  display: flex;
  gap: 2px;
  flex: none;
  margin: 17px 0 0 -7px;
}
.side__exit .btn {
  width: 68px;
  height: 24px;
  padding-top: 2px;
}
.side__exit .btn:last-child {
  width: 18px;
}

.watermark {
  position: absolute;
  left: 1036px;
  top: 609px;
  opacity: .5;
  pointer-events: none;
}
.watermark text {
  font: 400 49px Roboto, sans-serif;
  fill: #fff;
}

/* taskbar */
.taskbar {
  position: absolute;
  left: 0;
  top: 692px;
  display: flex;
  align-items: center;
  width: 1280px;
  height: 28px;
  padding: 3px 2px 1px;
  background: #d4d0c8;
  box-shadow: inset 0 1px 0 #d4d0c8, inset 0 2px 0 #fff;
}
.start {
  display: flex;
  align-items: center;
  gap: 1px;
  width: 52px;
  height: 22px;
  padding: 0 0 0 1px;
  background: #d4d0c8;
  border: 1px solid;
  border-color: #fff #404040 #404040 #fff;
  box-shadow: inset -1px -1px 0 #808080;
  font: bold 12px "DejaVu Sans Condensed", sans-serif;
  letter-spacing: -.5px;
  color: #000;
}
.quick {
  display: flex;
  align-items: center;
  padding-left: 9px;
}
.quick__item {
  display: flex;
  justify-content: center;
  width: 33.6px;
}
.quick__active {
  display: flex;
  align-items: center;
  justify-content: center;
  width: 31px;
  height: 22px;
  margin-left: 2px;
  background: #fff;
  border: 1px solid;
  border-color: #404040 #fff #fff #404040;
}
.tray {
  display: flex;
  align-items: center;
  width: 172px;
  height: 22px;
  margin-left: auto;
  padding-left: 6px;
  border: 1px solid;
  border-color: #808080 #fff #fff #808080;
}
.tray__net {
  margin-left: 9px;
}
.tray__vol {
  margin-left: 7px;
}
.tray__flag {
  margin-left: 8px;
}
.tray__time {
  margin-left: 14px;
  width: 51px;
  font-size: 11px;
  white-space: nowrap;
}
</style>
